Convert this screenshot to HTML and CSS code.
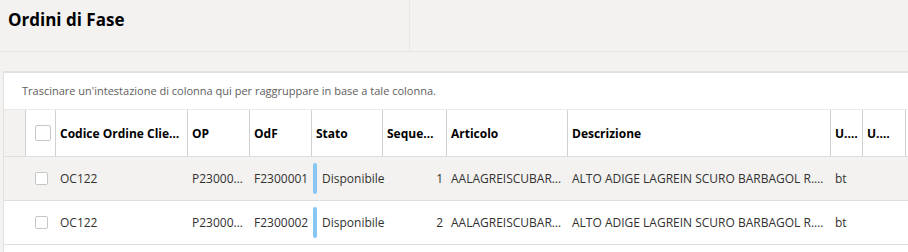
FILE: index.html
```html
<!doctype html>
<html>
<head>
  <meta charset="UTF-8">
  <title>Ordini di Fase</title>
  <link rel="stylesheet" href="styles.css">
</head>
<body>
  <div class="top">
    <div class="top-title"><h1>Ordini di Fase</h1></div>
    <div class="top-rest"></div>
  </div>
  <div class="gap"></div>
  <div class="card">
    <div class="group-panel">Trascinare un'intestazione di colonna qui per raggruppare in base a tale colonna.</div>
    <div class="grid">
      <div class="row head">
        <div class="cell lead"></div>
        <div class="cell chk"><span class="box big"></span></div>
        <div class="cell">Codice Ordine Clie…</div>
        <div class="cell">OP</div>
        <div class="cell">OdF</div>
        <div class="cell">Stato</div>
        <div class="cell">Seque…</div>
        <div class="cell">Articolo</div>
        <div class="cell">Descrizione</div>
        <div class="cell">U.…</div>
        <div class="cell">U.…</div>
      </div>
      <div class="row alt">
        <div class="cell lead"></div>
        <div class="cell chk"><span class="box"></span></div>
        <div class="cell">OC122</div>
        <div class="cell">P23000…</div>
        <div class="cell">F2300001</div>
        <div class="cell stato"><span class="bar"></span>Disponibile</div>
        <div class="cell num">1</div>
        <div class="cell">AALAGREISCUBAR…</div>
        <div class="cell">ALTO ADIGE LAGREIN SCURO BARBAGOL R.…</div>
        <div class="cell">bt</div>
        <div class="cell"></div>
      </div>
      <div class="row">
        <div class="cell lead"></div>
        <div class="cell chk"><span class="box"></span></div>
        <div class="cell">OC122</div>
        <div class="cell">P23000…</div>
        <div class="cell">F2300002</div>
        <div class="cell stato"><span class="bar"></span>Disponibile</div>
        <div class="cell num">2</div>
        <div class="cell">AALAGREISCUBAR…</div>
        <div class="cell">ALTO ADIGE LAGREIN SCURO BARBAGOL R.…</div>
        <div class="cell">bt</div>
        <div class="cell"></div>
      </div>
    </div>
  </div>
</body>
</html>
```
FILE: styles.css
```css
*{margin:0;
  padding:0;
  box-sizing:border-box;}
body{background:#f3f2f1;
     font-family:"Open Sans",Arial,sans-serif;
     font-size:12px;
     color:#323130;}
.top{display:flex;
     height:52px;
     border-bottom:1px solid #e8e6e4;}
.top-title{width:410px;
           border-right:1px solid #e8e6e4;
           padding:8px 0 0 8px;}
.top-title h1{font-size:17px;
              font-weight:bold;
              color:#000;
              line-height:24px;}
.top-rest{flex:1;}
.gap{height:19px;}
.card{margin-left:3px;
      background:#fff;
      border-top:2px solid #e3e1df;
      border-left:1px solid #e3e1df;
      height:181px;}
.group-panel{height:36px;
             line-height:36px;
             padding-left:18px;
             color:#605e5c;
             font-size:11px;}
.grid{border-top:1px solid #edebe9;}
.row{display:grid;
     grid-template-columns:22px 30px 132px 62px 62px 71px 64px 121px 263px 32px 43px;
     height:44px;
     border-bottom:1px solid #e1dfdd;
     align-items:center;}
.row.head{height:47px;
          align-items:stretch;}
.row.alt{background:#f3f2f1;}
.cell{white-space:nowrap;
      overflow:hidden;
      padding:0 4px;}
.head .cell{font-weight:bold;
            color:#000;
            border-right:1px solid #d2d0ce;
            display:flex;
            align-items:center;}
.head .lead{background:#f3f2f1;}
.cell.chk{padding-left:9px;}
.box{display:block;
     width:13px;
     height:13px;
     border:1px solid #c8c6c4;
     border-radius:2px;
     background:#fff;}
.box.big{width:16px;
         height:16px;}
.stato{display:flex;
       align-items:center;
       padding:0 0 0 1px;
       overflow:visible;}
.bar{flex-shrink:0;
     width:4px;
     height:31px;
     border-radius:2px;
     background:#88c6f6;
     margin-right:5px;}
.num{text-align:right;}
```
